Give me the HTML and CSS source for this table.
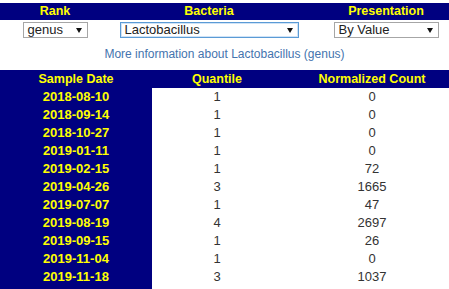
FILE: index.html
```html
<!DOCTYPE html>
<html>
<head>
<meta charset="utf-8">
<link rel="stylesheet" href="styles.css">
</head>
<body>
<div class="controls">
  <div class="ctl-head c1">Rank</div>
  <div class="ctl-head c2">Bacteria</div>
  <div class="ctl-head c3">Presentation</div>
  <div class="ctl-cell c1"><div class="sel sel-rank"><span>genus</span><svg class="arrow" width="6" height="5" viewBox="0 0 6 5"><path d="M0 0H6L3 5Z" fill="#111"/></svg></div></div>
  <div class="ctl-cell c2"><div class="sel sel-bac focus"><span>Lactobacillus</span><svg class="arrow" width="6" height="5" viewBox="0 0 6 5"><path d="M0 0H6L3 5Z" fill="#111"/></svg></div></div>
  <div class="ctl-cell c3"><div class="sel sel-pres"><span>By Value</span><svg class="arrow" width="6" height="5" viewBox="0 0 6 5"><path d="M0 0H6L3 5Z" fill="#111"/></svg></div></div>
</div>
<div class="info"><a class="info-link">More information about Lactobacillus (genus)</a></div>
<div class="data">
  <div class="th">Sample Date</div><div class="th">Quantile</div><div class="th th3">Normalized Count</div>
  <div class="date">2018-08-10</div><div class="num">1</div><div class="num n3">0</div>
  <div class="date">2018-09-14</div><div class="num">1</div><div class="num n3">0</div>
  <div class="date">2018-10-27</div><div class="num">1</div><div class="num n3">0</div>
  <div class="date">2019-01-11</div><div class="num">1</div><div class="num n3">0</div>
  <div class="date">2019-02-15</div><div class="num">1</div><div class="num n3">72</div>
  <div class="date">2019-04-26</div><div class="num">3</div><div class="num n3">1665</div>
  <div class="date">2019-07-07</div><div class="num">1</div><div class="num n3">47</div>
  <div class="date">2019-08-19</div><div class="num">4</div><div class="num n3">2697</div>
  <div class="date">2019-09-15</div><div class="num">1</div><div class="num n3">26</div>
  <div class="date">2019-11-04</div><div class="num">1</div><div class="num n3">0</div>
  <div class="date">2019-11-18</div><div class="num">3</div><div class="num n3">1037</div>
  <div class="date"></div><div class="num"></div><div class="num n3"></div>
</div>
</body>
</html>
```
FILE: styles.css
```css
html, body {
  margin: 0;
  padding: 0;
  background: #fff;
  overflow: hidden;
}
body {
  padding-top: 3px;
  font-family: "Liberation Sans", Arial, sans-serif;
}
.controls {
  display: grid;
  grid-template-columns: 110px 198px 141px;
  grid-template-rows: 17px 19px;
}
.ctl-head {
  background: #000080;
  color: #ffff00;
  font-weight: bold;
  font-size: 12.5px;
  line-height: 17px;
  text-align: center;
}
.ctl-head.c3 { padding-left: 15px; }
.ctl-cell {
  display: flex;
  justify-content: center;
  align-items: center;
  padding-top: 1px;
}
.ctl-cell.c3 { padding-left: 15px; }
.sel {
  box-sizing: border-box;
  height: 16px;
  border: 1px solid #a6a6a6;
  background: #fff;
  display: flex;
  align-items: center;
  justify-content: space-between;
  padding: 0 5px 0 4px;
  font-size: 13px;
  color: #222;
}
.sel span { line-height: 14px; }
.sel-rank { width: 65px; }
.sel-bac { width: 179px; }
.sel-pres { width: 105px; }
.sel.focus {
  border-color: #5b9bd5;
  box-shadow: inset 0 0 0 1px #cfe3f7;
}
.arrow { display: block; flex: none; }
.info {
  text-align: center;
  padding-top: 5px;
  height: 31px;
  box-sizing: border-box;
}
.info-link {
  font-size: 12px;
  color: #4474ae;
  line-height: 16px;
}
.data {
  display: grid;
  grid-template-columns: 152px 130px 167px;
  grid-auto-rows: 18px;
}
.th {
  background: #000080;
  color: #ffff00;
  font-weight: bold;
  font-size: 12.5px;
  line-height: 18px;
  text-align: center;
}
.th3, .n3 { padding-left: 13px; }
.date {
  background: #000080;
  color: #ffff00;
  font-weight: bold;
  font-size: 13px;
  line-height: 18px;
  text-align: center;
}
.num {
  font-size: 13px;
  color: #333;
  line-height: 18px;
  text-align: center;
}
```
